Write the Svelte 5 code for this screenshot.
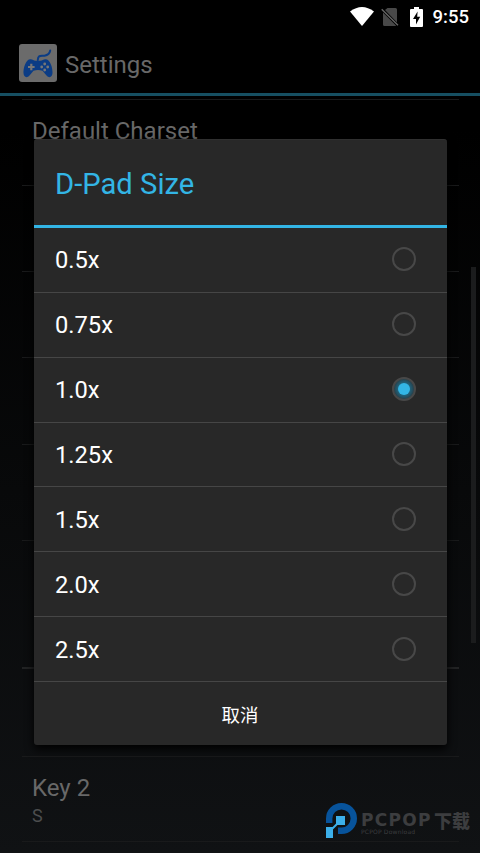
<script lang="ts">
    interface Preference {
        title?: string,
        summary?: string,
        height: number,
        section?: boolean,
    }

    const preferences: Preference[] = [
        { title: "Default Charset", height: 86 },
        { height: 86 },
        { height: 86 },
        { height: 87 },
        { height: 96 },
        { height: 129, section: true },
        { height: 87 },
        { title: "Key 2", summary: "S", height: 86 },
    ];

    const sizes = ["0.5x", "0.75x", "1.0x", "1.25x", "1.5x", "2.0x", "2.5x"];

    let selected = $state<string>("1.0x");
    let open = $state<boolean>(true);

    function choose(size: string) {
        selected = size;
    }
</script>

<div class="screen">
    <header class="statusbar">
        <svg class="wifi" viewBox="0 0 24 19"><path d="M0 4.5Q12-4.5 24 4.5L12 19Z" fill="#fff" /></svg>
        <svg class="sim" viewBox="0 0 18 20">
            <path d="M4 3L6.500 1H14.500Q16 1 16 2.500V15.500ZM2 5.500L15 18.500Q14.500 19 14 19H3.500Q2 19 2 17.500Z" fill="#484848" />
            <path d="M.7 2.200L17 18.300" stroke="#686868" stroke-width="1.300" />
        </svg>
        <svg class="battery" viewBox="0 0 13 20">
            <path d="M4 0H9V2H12Q13 2 13 3V19Q13 20 12 20H1Q0 20 0 19V3Q0 2 1 2H4Z" fill="#fff" />
            <path d="M7.600 4.500L3 12H6V17.500L10.200 9.800H7.200Z" fill="#000" />
        </svg>
        <span class="clock">9:55</span>
    </header>

    <div class="actionbar">
        <svg class="appicon" viewBox="0 0 38 38">
            <rect width="38" height="38" rx="3" fill="#6b6b6b" />
            <path d="M18.800 16C19 10.500 22 12.300 25.500 11.700C29.500 11 30.700 9.500 31.200 6.500" fill="none" stroke="#0b3c85" stroke-width="2" stroke-linecap="round" />
            <path d="M11 15.200C13.500 14.800 14.500 16.700 16.500 16.700H21.500C23.500 16.700 24.500 14.800 27 15.200C31.500 15.700 33.700 24.500 33.500 29C33.300 33.500 30 34.300 27.500 31.500L23.500 26.800Q19 25.300 14.500 26.800L10.500 31.500C8 34.300 4.700 33.500 4.500 29C4.300 24.500 6.500 15.700 11 15.200Z" fill="#0b3c85" />
            <path d="M12.300 19.700V26.300M9 23H15.600" stroke="#777" stroke-width="2.200" />
            <g fill="#777">
                <circle cx="25.700" cy="20" r="1.400" />
                <circle cx="25.700" cy="26" r="1.400" />
                <circle cx="22.700" cy="23" r="1.400" />
                <circle cx="28.700" cy="23" r="1.400" />
            </g>
        </svg>
        <span class="heading">Settings</span>
    </div>

    <div class="preferences">
        {#each preferences as pref}
            <div class="preference" class:section={pref.section} style="height: {pref.height}px">
                {#if pref.title}
                    <div class="pref-title">{pref.title}</div>
                {/if}
                {#if pref.summary}
                    <div class="pref-summary">{pref.summary}</div>
                {/if}
            </div>
        {/each}
    </div>
    <div class="scrollbar"></div>

    {#if open}
        <div class="dialog" role="dialog" aria-label="D-Pad Size">
            <h1>D-Pad Size</h1>
            <div class="options" role="radiogroup">
                {#each sizes as size}
                    <button class="option" role="radio" aria-checked={selected == size} onclick={() => choose(size)}>
                        <span>{size}</span>
                        <span class="radio" class:checked={selected == size}></span>
                    </button>
                {/each}
            </div>
            <button class="cancel" onclick={() => open = false}>取消</button>
        </div>
    {/if}

    <div class="watermark">
        <svg viewBox="0 0 32 36">
            <path d="M3.200 20V15.500A12.300 12.300 0 1 1 15.500 27.800H12" fill="none" stroke="#07539b" stroke-width="6.400" />
            <path d="M5 27L13 19" stroke="#3cafe9" stroke-width="2" />
            <path d="M10 13H19V22H10ZM0 24H7V35H0Z" fill="#3cafe9" />
        </svg>
        <div class="brand">
            <div class="brand-name"><b>PCPOP</b><strong>下载</strong></div>
            <small>PCPOP Download</small>
        </div>
    </div>
</div>

<style>
    :global(body) {
        margin: 0;
        background: #000;
    }

    .screen {
        position: relative;
        display: flex;
        flex-direction: column;
        width: 480px;
        height: 853px;
        overflow: hidden;
        box-sizing: border-box;
        background: linear-gradient(#000 0, #000 130px, #101214 853px);
        color: #686868;
        font-family: Roboto, "Noto Sans CJK SC", sans-serif;
    }

    .statusbar {
        display: flex;
        flex: none;
        align-items: center;
        justify-content: flex-end;
        height: 33px;
        padding-right: 11px;
        box-sizing: border-box;
        background: #000;
    }

    .wifi {
        width: 24px;
        height: 19px;
        margin-right: 7px;
    }

    .sim {
        width: 18px;
        height: 20px;
        margin-right: 11px;
    }

    .battery {
        width: 13px;
        height: 20px;
        margin-right: 10px;
    }

    .clock {
        color: #fff;
        font-size: 18.5px;
        font-weight: 500;
    }

    .actionbar {
        display: flex;
        flex: none;
        align-items: center;
        gap: 8px;
        height: 63px;
        padding-left: 19px;
        box-sizing: border-box;
        border-bottom: 3px solid #164f62;
        font-size: 24px;
    }

    .appicon {
        width: 38px;
        height: 38px;
    }

    .heading {
        padding-top: 4px;
    }

    .preferences {
        padding: 3px 21px 0 22px;
    }

    .preference {
        display: flex;
        flex-direction: column;
        padding: 17px 10px 0;
        box-sizing: border-box;
        border-top: 1px solid #191a1b;
    }

    .preference:last-child {
        border-bottom: 1px solid #191a1b;
    }

    .section {
        border-bottom: 2px solid #222324;
    }

    .section + .preference {
        border-top: none;
    }

    .pref-title {
        font-size: 24px;
        line-height: 29px;
    }

    .pref-summary {
        color: #4c4d4e;
        font-size: 18px;
        line-height: 26px;
    }

    .scrollbar {
        position: absolute;
        right: 4px;
        top: 267px;
        width: 5px;
        height: 376px;
        background: #1b1c1d;
    }

    .dialog {
        position: absolute;
        left: 33.5px;
        top: 139px;
        display: flex;
        flex-direction: column;
        width: 413px;
        height: 606px;
        box-sizing: border-box;
        border-top: 1px solid #303030;
        border-radius: 3px;
        background: #282828;
        box-shadow: 0 4px 10px #000;
    }

    h1 {
        flex: none;
        height: 88px;
        margin: 0;
        padding-left: 21.5px;
        box-sizing: border-box;
        border-bottom: 3px solid #33b5e5;
        color: #33b5e5;
        font-size: 29.2px;
        font-weight: 400;
        line-height: 88px;
    }

    .options {
        display: grid;
        grid-template-rows: repeat(7, 1fr);
        flex: none;
        height: 454px;
    }

    button {
        border: none;
        background: none;
        color: #fff;
        font-family: inherit;
    }

    .option {
        display: flex;
        align-items: center;
        justify-content: space-between;
        padding: 1px 30.5px 0 21.5px;
        border-bottom: 1px solid #464646;
        font-size: 23.7px;
    }

    .radio {
        display: grid;
        place-items: center;
        width: 24px;
        height: 24px;
        margin-bottom: 2px;
        box-sizing: border-box;
        border: 2px solid #484848;
        border-radius: 50%;
    }

    .checked {
        background: radial-gradient(circle, #206078 45%, #293b43 75%);
    }

    .checked::after {
        content: "";
        width: 12px;
        height: 12px;
        border-radius: 50%;
        background: #33b5e5;
    }

    .cancel {
        flex: 1;
        font-size: 18.5px;
    }

    .watermark {
        position: absolute;
        left: 326px;
        top: 803px;
        display: flex;
        gap: 3px;
        color: #3c3d3f;
    }

    .watermark > svg {
        width: 32px;
        height: 36px;
    }

    .brand {
        display: flex;
        flex-direction: column;
        padding-top: 7px;
    }

    .brand-name {
        display: flex;
        align-items: center;
        height: 19px;
    }

    b {
        width: 73px;
        font-family: "DejaVu Sans", sans-serif;
        font-size: 17px;
        letter-spacing: 1.3px;
    }

    strong {
        font-size: 18px;
        font-weight: 900;
    }

    small {
        font-family: "DejaVu Sans", sans-serif;
        font-size: 6px;
        letter-spacing: 0.2px;
        line-height: 6px;
    }
</style>
